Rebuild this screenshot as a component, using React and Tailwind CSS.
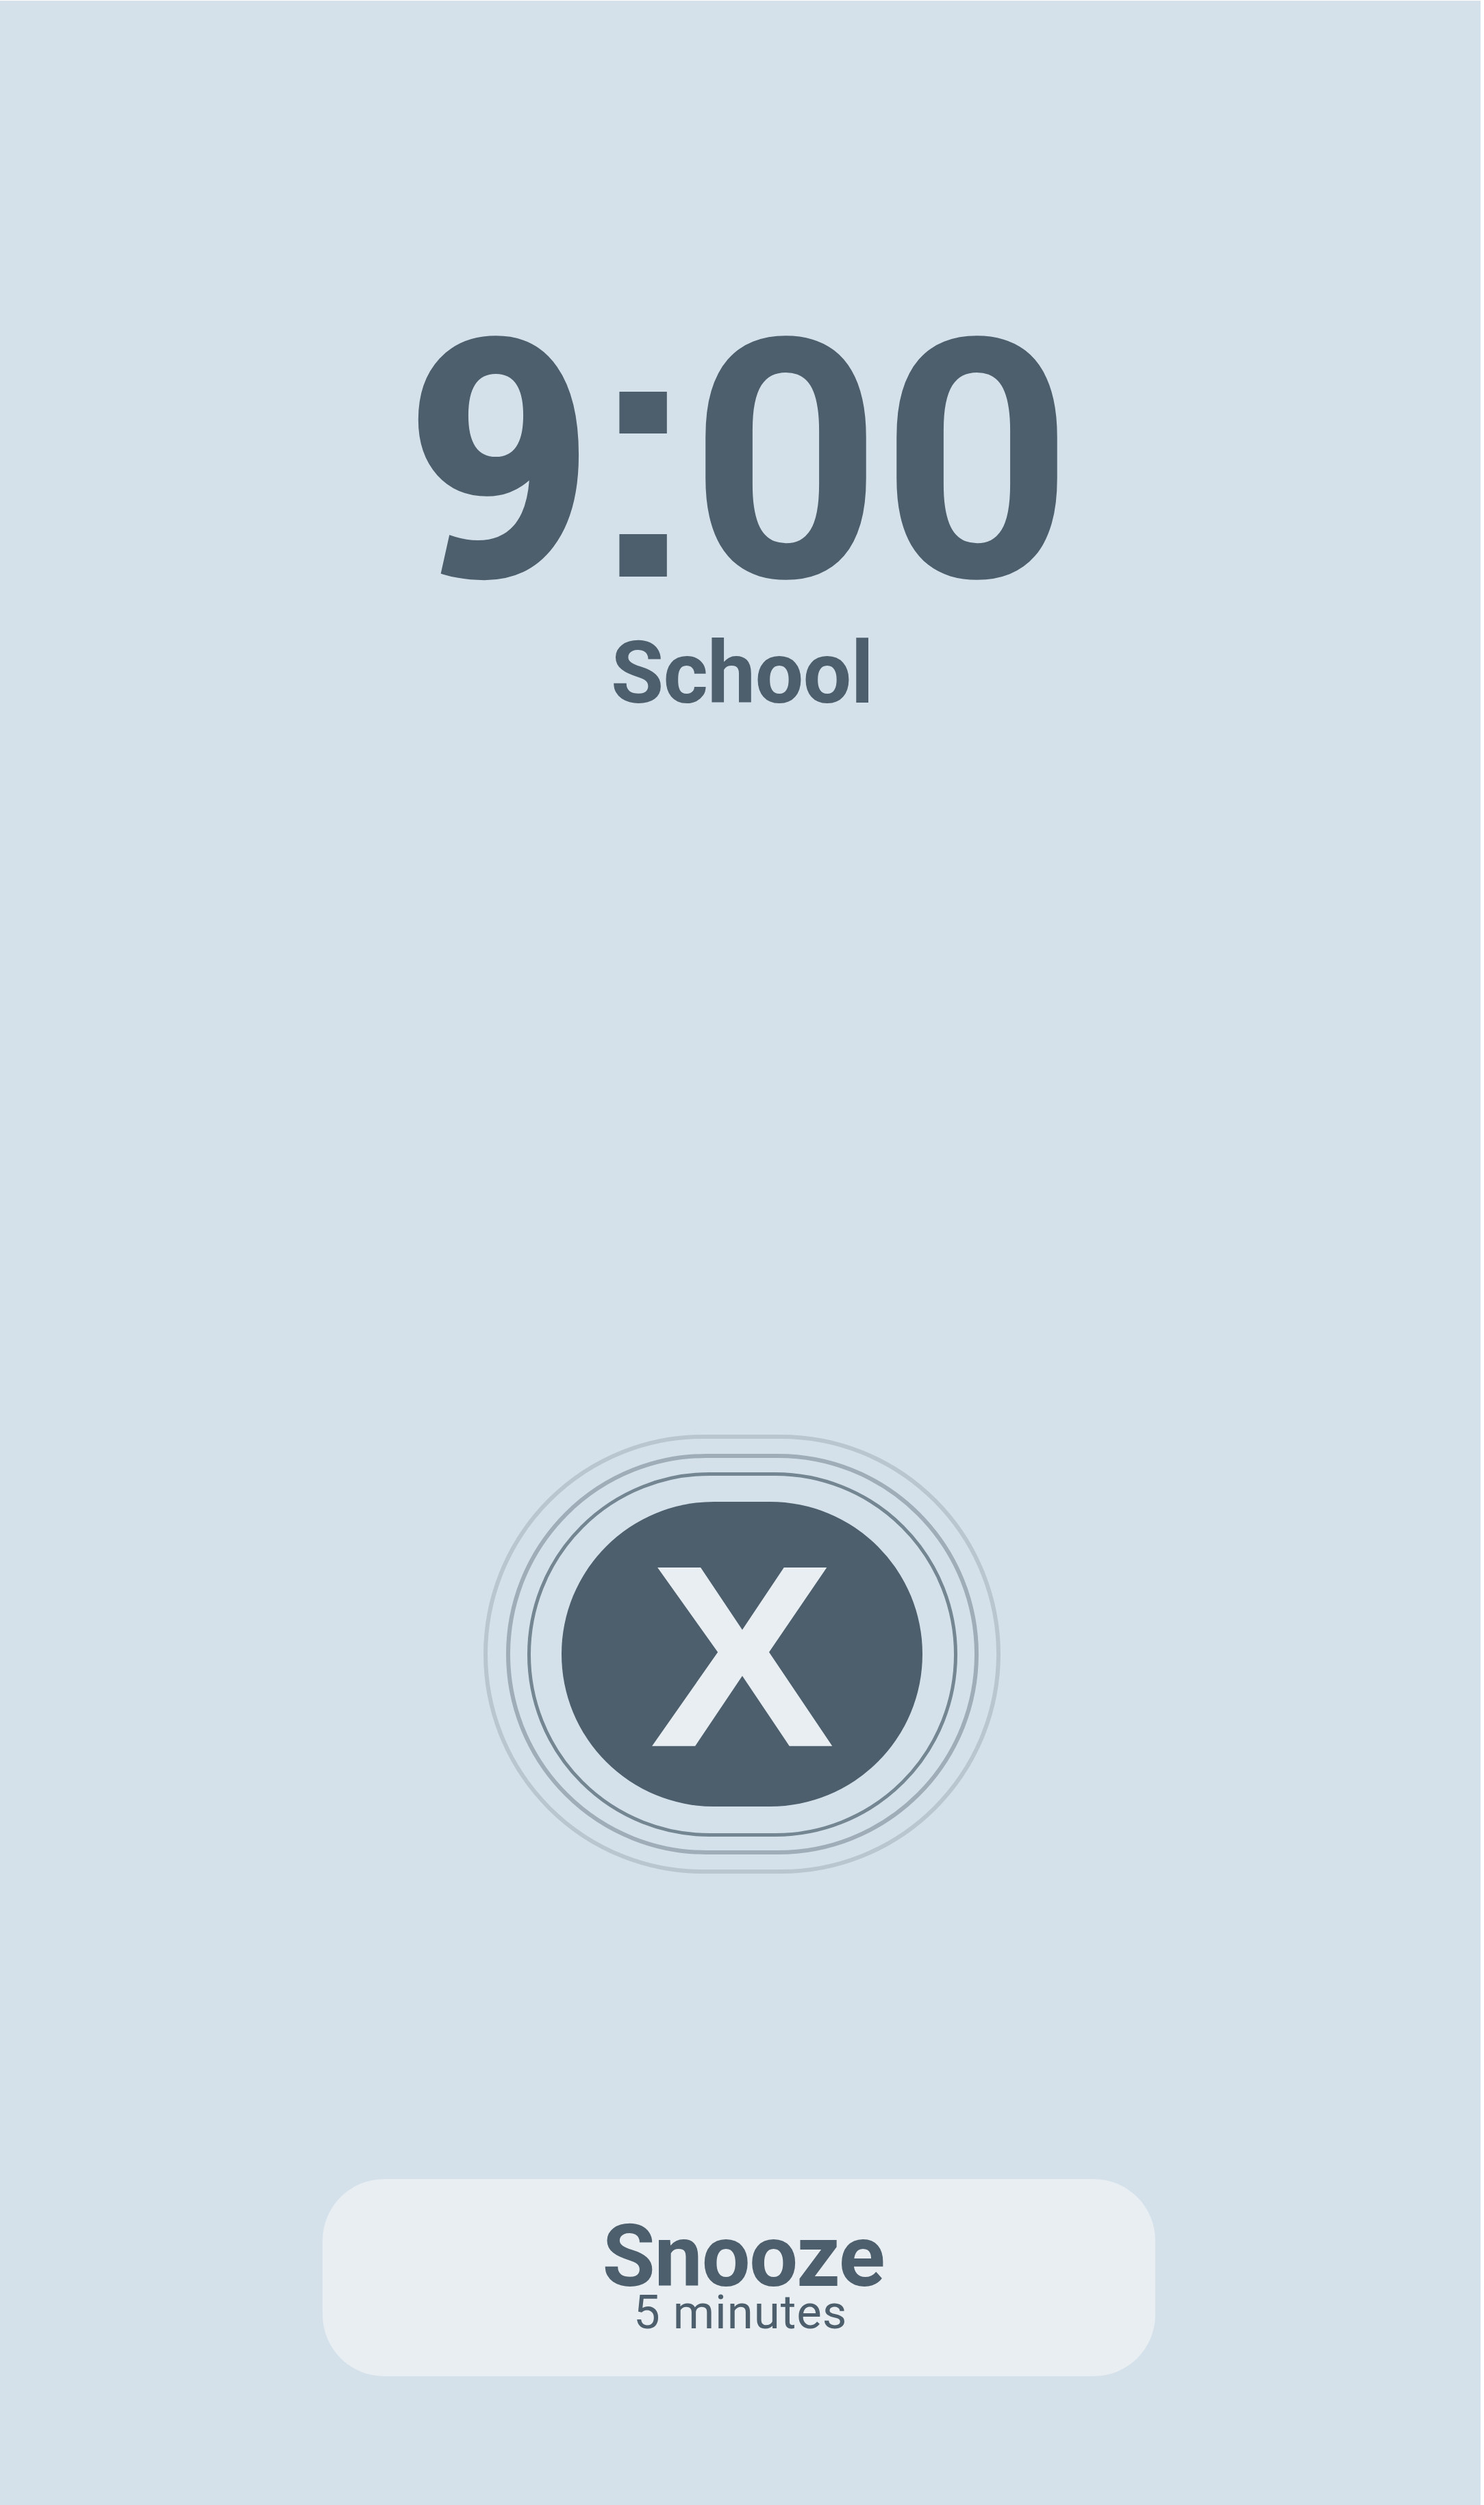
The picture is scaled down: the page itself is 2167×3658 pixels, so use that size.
import React from "react";

function Clock() {
  return (
    <div className="ml-[589.5px] flex h-[532px] items-baseline font-bold">
      <span className="block w-[267px] shrink-0 -translate-y-[1.5px] origin-left scale-x-[0.949] font-['DejaVu_Sans_Condensed','DejaVu_Sans',sans-serif] text-[472.5px] leading-[472px] [clip-path:polygon(0_0,300px_0,300px_472px,39px_472px,77px_310px,0_310px)]">
        9
      </span>
      <span className="block w-[151px] shrink-0 origin-left scale-x-[0.922] bg-[linear-gradient(to_bottom,#4d5f6c_244px,transparent_244px,transparent_391px,#4d5f6c_391px)] bg-clip-text font-['Liberation_Sans',Arial,sans-serif] text-[535px] leading-[535px] text-transparent">
        :
      </span>
      <span className="block w-[279px] shrink-0 text-[488px] leading-[488px]">0</span>
      <span className="block w-[279px] shrink-0 text-[488px] leading-[488px]">0</span>
    </div>
  );
}

function DismissButton() {
  return (
    <div className="mt-[1048px] ml-[706px] flex h-[641px] w-[755px] items-center justify-center rounded-full border-[6px] border-[#b9c6cf]">
      <div className="flex h-[585px] w-[690px] shrink-0 items-center justify-center rounded-full border-[6px] border-[#9fadb8]">
        <div className="flex h-[532px] w-[628px] shrink-0 items-center justify-center rounded-full border-[5px] border-[#748692]">
          <button className="flex h-[445px] w-[527px] shrink-0 items-center justify-center rounded-full bg-[#4d5f6c] pt-[7px]">
            <span className="block scale-x-[1.063] font-['Liberation_Sans',Arial,sans-serif] text-[377px] leading-[378px] font-bold text-[#e8eef2] [-webkit-text-stroke:1.5px_#e8eef2]">
              X
            </span>
          </button>
        </div>
      </div>
    </div>
  );
}

function SnoozeButton() {
  return (
    <button className="mt-[446px] ml-[470.5px] flex h-[288px] w-[1216px] flex-col items-start rounded-[90px] bg-[#e8eef2] pt-[67px] text-left whitespace-nowrap">
      <span className="ml-[409px] text-[125.5px] leading-[94px] font-bold tracking-[-1.2px]">Snooze</span>
      <span className="ml-[454.5px] text-[69px] leading-[68px] font-normal tracking-[0.9px]">5 minutes</span>
    </button>
  );
}

export default function App() {
  return (
    <div className="h-[3658px] w-[2167px] overflow-hidden bg-white pt-px">
      <main className="flex h-[3657px] w-[2162px] flex-col items-start bg-[#d4e1ea] pt-[388px] font-[Roboto,sans-serif] text-[#4d5f6c]">
        <Clock />
        <h1 className="ml-[892px] text-[125.5px] leading-[126px] font-bold tracking-[-0.8px]">School</h1>
        <DismissButton />
        <SnoozeButton />
      </main>
    </div>
  );
}
